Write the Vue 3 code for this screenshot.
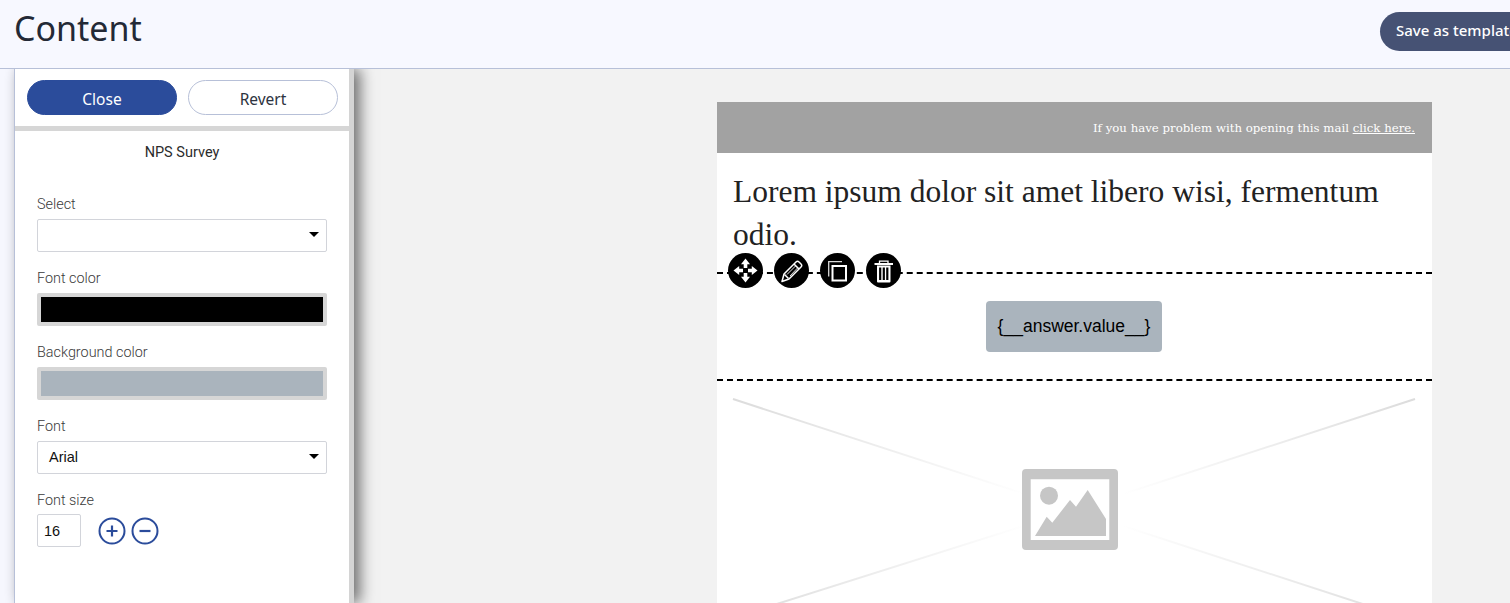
<script setup>
const lorem = 'Lorem ipsum dolor sit amet libero wisi, fermentum odio.'
</script>

<template>
  <div class="page">
    <header class="top">
      <h1 class="title">Content</h1>
      <button class="save">Save as template</button>
    </header>
    <div class="main">
      <aside class="panel">
        <div class="actions">
          <button class="btn primary">Close</button>
          <button class="btn ghost">Revert</button>
        </div>
        <div class="form">
          <div class="form-title">NPS Survey</div>
          <div class="field first">
            <label>Select</label>
            <div class="select"><span></span><i class="caret"></i></div>
          </div>
          <div class="field">
            <label>Font color</label>
            <div class="swatch"><div class="fill black"></div></div>
          </div>
          <div class="field">
            <label>Background color</label>
            <div class="swatch"><div class="fill grey"></div></div>
          </div>
          <div class="field">
            <label>Font</label>
            <div class="select"><span>Arial</span><i class="caret"></i></div>
          </div>
          <div class="field">
            <label>Font size</label>
            <div class="size-row">
              <div class="size">16</div>
              <svg class="round first-round" viewBox="0 0 28 28" width="28" height="28"><circle cx="14" cy="14" r="12.5" fill="none" stroke="#2b4c9b" stroke-width="2"/><path d="M8.5 14h11M14 8.5v11" stroke="#2b4c9b" stroke-width="2.2" fill="none"/></svg>
              <svg class="round" viewBox="0 0 28 28" width="28" height="28"><circle cx="14" cy="14" r="12.5" fill="none" stroke="#2b4c9b" stroke-width="2"/><path d="M8.5 14h11" stroke="#2b4c9b" stroke-width="2.2" fill="none"/></svg>
            </div>
          </div>
        </div>
      </aside>
      <section class="canvas">
        <div class="mail">
          <div class="mail-head">If you have problem with opening this mail <u>click here.</u></div>
          <p class="lorem">{{ lorem }}</p>
          <div class="block">
            <div class="tools">
              <span class="tool">
                <svg viewBox="0 0 35 35" width="35" height="35" fill="#fff">
                  <path d="M17.500 5.500L22 11.200H19.300V15H15.700V11.200H13Z"/>
                  <path transform="rotate(90 17.500 17.500)" d="M17.500 5.500L22 11.200H19.300V15H15.700V11.200H13Z"/>
                  <path transform="rotate(180 17.500 17.500)" d="M17.500 5.500L22 11.200H19.300V15H15.700V11.200H13Z"/>
                  <path transform="rotate(270 17.500 17.500)" d="M17.500 5.500L22 11.200H19.300V15H15.700V11.200H13Z"/>
                </svg>
              </span>
              <span class="tool">
                <svg viewBox="0 0 35 35" width="35" height="35" fill="none" stroke="#fff" stroke-width="1.500" stroke-linejoin="round">
                  <path d="M8 28.500L10 21L22 9Q23.500 7.500 25 9L27 11Q28.500 12.500 27 14L15 26Z"/>
                  <path d="M20 11L25 16M10.500 21.500L14.500 25.500"/>
                  <path d="M13 21.500L21.500 13M16 23L23.500 15" stroke-width="0.9"/>
                </svg>
              </span>
              <span class="tool">
                <svg viewBox="0 0 35 35" width="35" height="35" fill="none" stroke="#fff">
                  <path d="M22 8.700H8.700V23.500" stroke-width="1.300" stroke="#d8d8d8"/>
                  <rect x="12.500" y="13" width="13.500" height="14.500" stroke-width="2"/>
                </svg>
              </span>
              <span class="tool">
                <svg viewBox="0 0 35 35" width="35" height="35" fill="none">
                  <path d="M8.500 11H27" stroke="#fff" stroke-width="2"/>
                  <path d="M13.500 10.500V8.200H22V10.500" stroke="#fff" stroke-width="1.300"/>
                  <path d="M11 12.500H24.500V28.500a1 1 0 0 1-1 1H12a1 1 0 0 1-1-1Z" fill="#fff"/>
                  <path d="M14.200 14.500V27M17.800 14.500V27M21.300 14.500V27" stroke="#000" stroke-width="2.200"/>
                </svg>
              </span>
            </div>
            <div class="answer">{__answer.value__}</div>
          </div>
          <div class="placeholder">
            <svg class="cross" viewBox="0 0 682 222" preserveAspectRatio="none">
              <defs>
                <linearGradient id="fadeA" gradientUnits="userSpaceOnUse" x1="0" x2="682" y1="0" y2="0">
                  <stop offset="0" stop-color="#dcdcdc"/>
                  <stop offset="0.43" stop-color="#ffffff"/>
                  <stop offset="0.57" stop-color="#ffffff"/>
                  <stop offset="1" stop-color="#dcdcdc"/>
                </linearGradient>
              </defs>
              <path d="M0 0L341 111L682 0M341 111L-10 222M341 111L682 222" stroke="url(#fadeA)" stroke-width="2" fill="none"/>
            </svg>
            <svg class="pic" viewBox="0 0 96 81" width="96" height="81">
              <path fill-rule="evenodd" fill="#c6c6c6" d="M4 0h88a4 4 0 0 1 4 4v73a4 4 0 0 1-4 4H4a4 4 0 0 1-4-4V4a4 4 0 0 1 4-4zM8.700 10.300V71H87.300V10.300z"/>
              <circle cx="27" cy="26.700" r="9" fill="#c6c6c6"/>
              <path fill="#c6c6c6" d="M13 67L24.700 47.700L30.300 53.700L48 31L54 37.700L65.700 21L84 50V67Z"/>
            </svg>
          </div>
        </div>
      </section>
    </div>
  </div>
</template>

<style>
html, body { margin: 0; overflow: hidden; background: #f7f8ff; }
</style>

<style scoped>
.page { width: 1510px; height: 603px; overflow: hidden; display: flex; flex-direction: column; background: #f7f8ff; }
.top { width: 1550px; height: 68px; flex: none; box-sizing: border-box; padding: 0 0 17px 14px; display: flex; align-items: flex-end; justify-content: space-between; }
.title { margin: 0 0 1px; font: 400 34px/44px "Noto Sans", sans-serif; color: #232936; }
.save { width: 170px; height: 39px; padding: 0 0 3px 16px; text-align: left; border: 0; border-radius: 20px; background: #465274; color: #fff; font: 500 15px "Noto Sans", sans-serif; }
.main { flex: 1; min-height: 0; display: flex; overflow: hidden; padding-left: 14px; border-top: 1px solid #b7c0d8; background: linear-gradient(90deg, #f7f8ff 14px, #f2f2f2 14px); }
.panel { width: 340px; flex: none; box-sizing: border-box; background: #fff; border-left: 1px solid #b7c0d8; border-right: 5px solid #d4d4d4; box-shadow: 6px 0 14px rgba(0,0,0,.55); position: relative; }
.actions { display: flex; gap: 11px; padding: 11px 0 0 12px; height: 62px; box-sizing: border-box; border-bottom: 5px solid #d6d6d6; }
.btn { width: 150px; height: 35px; box-sizing: border-box; border-radius: 18px; padding: 3px 0 0; font: 400 15.500px "Noto Sans", sans-serif; }
.primary { background: #2b4c9b; border: 1px solid #2b4c9b; color: #fff; }
.ghost { background: #fff; border: 1px solid #b7c0d8; color: #2d3340; }
.form { padding: 0 22px; }
.form-title { text-align: center; font: 400 14.500px/17px Roboto, sans-serif; color: #2b2b2b; padding-top: 13px; }
.field { margin-top: 18px; }
.field.first { margin-top: 35px; }
.field label { display: block; font: 300 14.400px/17px Roboto, sans-serif; color: #3a3a3a; margin-bottom: 6px; }
.select { height: 33px; box-sizing: border-box; border: 1px solid #d2d4da; border-radius: 2px; display: flex; align-items: center; justify-content: space-between; padding: 0 7px 2px 11px; font: 400 14.500px "Liberation Sans", sans-serif; color: #111; }
.caret { width: 0; height: 0; border-left: 5px solid transparent; border-right: 5px solid transparent; border-top: 5px solid #000; }
.swatch { height: 33px; box-sizing: border-box; border: 4px solid #d6d6d6; border-radius: 2px; }
.fill { height: 100%; }
.black { background: #000; }
.grey { background: #aab4bd; }
.size-row { display: flex; align-items: center; margin-top: -1px; }
.size { width: 44px; height: 33px; box-sizing: border-box; border: 1px solid #d2d4da; border-radius: 2px; display: flex; align-items: center; padding-left: 6px; font: 400 14.500px "Liberation Sans", sans-serif; color: #111; }
.round { margin-left: 5px; }
.first-round { margin-left: 17px; }
.canvas { flex: 1; min-width: 0; display: flex; justify-content: flex-start; padding: 33px 0 0 363px; }
.mail { width: 715px; flex: none; background: #fff; align-self: flex-start; }
.mail-head { height: 51px; box-sizing: border-box; background: #a2a2a2; color: #fff; text-align: right; line-height: 52px; padding-right: 17px; font-family: "DejaVu Serif", serif; font-size: 11.750px; }
.lorem { margin: 0; padding: 17px 17px 0 16px; height: 119px; box-sizing: border-box; font: 400 31.500px/43px "Liberation Serif", serif; color: #222; }
.block { position: relative; height: 109px; box-sizing: border-box; border-top: 2px dashed #000; border-bottom: 2px dashed #000; display: flex; justify-content: center; padding-top: 27px; }
.tools { position: absolute; left: 11px; top: -21px; display: flex; gap: 11px; }
.tool { width: 35px; height: 35px; border-radius: 50%; background: #000; display: flex; align-items: center; justify-content: center; }
.answer { width: 176px; height: 51px; margin-right: 1px; border-radius: 4px; background: #aab4bd; color: #000; display: flex; align-items: center; justify-content: center; font: 400 17.500px "Liberation Sans", sans-serif; }
.placeholder { position: relative; height: 222px; margin: 18px 17px 0 16px; display: flex; justify-content: center; }
.cross { position: absolute; inset: 0; width: 100%; height: 100%; overflow: visible; }
.pic { position: relative; margin-top: 70px; margin-left: -8px; }
</style>
